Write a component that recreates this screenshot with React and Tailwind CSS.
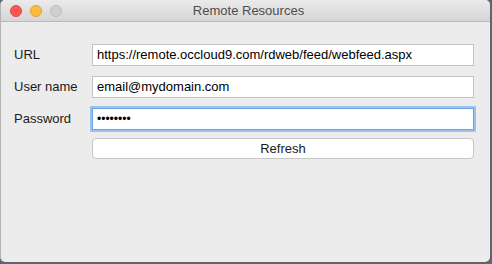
export default function App() {
  const field = "h-[22px] flex items-center px-[4px] bg-white border border-[#c3c3c3] text-[13px] text-black"

  return (
    <div className="w-[492px] h-[264px] bg-[#5d6670] font-['Liberation_Sans',Arial,sans-serif]">
      <div className="w-[490px] h-[262px] bg-[#ececec] rounded-[5px] overflow-hidden border-l border-[#b4b4b4] flex flex-col">
        {/* title bar */}
        <div className="h-[22px] shrink-0 relative flex items-center justify-center bg-gradient-to-b from-[#ebebeb] to-[#d5d5d5] border-b border-[#b9b9b9]">
          <div className="absolute left-[9px] top-[5px] flex gap-[8px]">
            <span className="w-[12px] h-[12px] rounded-full bg-[#fc5753] border border-[#df4744]" />
            <span className="w-[12px] h-[12px] rounded-full bg-[#fdbc40] border border-[#de9f34]" />
            <span className="w-[12px] h-[12px] rounded-full bg-[#d0d0d0] border border-[#bcbcbc]" />
          </div>
          <span className="text-[13px] text-[#4d4d4d] pl-[6px]">Remote Resources</span>
        </div>

        {/* form */}
        <div className="pt-[22px] pl-[13px] pr-[16px] grid grid-cols-[78px_1fr] gap-y-[10px] items-center">
          <span className="text-[13px] text-[#1a1a1a]">URL</span>
          <div className={field}>https://remote.occloud9.com/rdweb/feed/webfeed.aspx</div>

          <span className="text-[13px] text-[#1a1a1a]">User name</span>
          <div className={field}>email@mydomain.com</div>

          <span className="text-[13px] text-[#1a1a1a]">Password</span>
          <div className="h-[22px] flex items-center px-[4px] bg-white border border-[#6e9fe4] shadow-[0_0_0_2px_#9ec1f1] text-[12px] text-black">
            ••••••••
          </div>

          <span />
          <div className="h-[21px] -mt-[2px] flex items-center justify-center bg-white border border-[#c6c6c6] rounded-[4px] text-[13px] text-[#1a1a1a]">
            Refresh
          </div>
        </div>
      </div>
    </div>
  )
}
